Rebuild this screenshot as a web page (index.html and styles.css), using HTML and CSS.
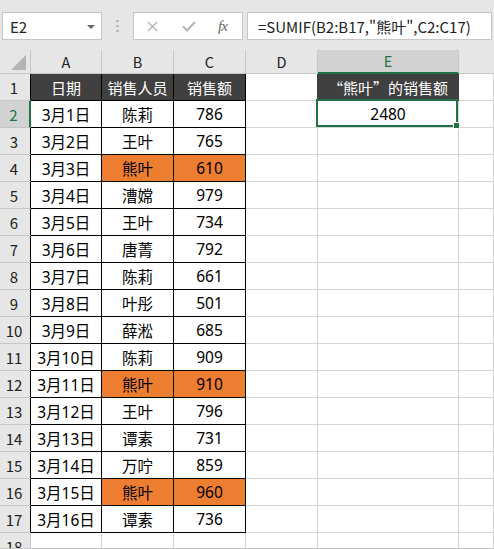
FILE: index.html
```html
<!DOCTYPE html>
<html lang="zh-CN">
<head>
<meta charset="utf-8">
<title>SUMIF</title>
<link rel="stylesheet" href="styles.css">
</head>
<body>
<div class="app">
  <div class="topbar">
    <div class="namebox">
      <span class="name">E2</span>
      <svg class="dd" width="8" height="4" viewBox="0 0 8 4"><polygon points="0,0 8,0 4,4" fill="#666"/></svg>
    </div>
    <div class="sep">
      <svg width="3" height="12" viewBox="0 0 3 12"><rect x="0.5" y="0" width="2" height="2" fill="#a8a8a8"/><rect x="0.5" y="5" width="2" height="2" fill="#a8a8a8"/><rect x="0.5" y="10" width="2" height="2" fill="#a8a8a8"/></svg>
    </div>
    <div class="fxbox">
      <svg class="ic-x" width="11" height="11" viewBox="0 0 11 11"><path d="M1 1 L10 10 M10 1 L1 10" stroke="#b4b4b4" stroke-width="1.4" fill="none"/></svg>
      <svg class="ic-ok" width="14" height="11" viewBox="0 0 14 11"><path d="M1 5.5 L5 9.5 L13 1" stroke="#b4b4b4" stroke-width="2" fill="none"/></svg>
      <span class="fx">fx</span>
    </div>
    <div class="formula">=SUMIF(B2:B17,"熊叶",C2:C17)</div>
  </div>
  <div class="sheet">
    <div class="ch corner"><span class="tri"></span></div>
    <div class="ch">A</div><div class="ch">B</div><div class="ch">C</div><div class="ch">D</div><div class="ch sel">E</div><div class="ch last"></div>

    <div class="rh tb">1</div>
    <div class="c t hd">日期</div><div class="c t hd">销售人员</div><div class="c t hd">销售额</div><div class="c dl"></div><div class="c hd e1">“熊叶”的销售额</div><div class="c"></div>

    <div class="rh rsel">2</div>
    <div class="c t">3月1日</div><div class="c t">陈莉</div><div class="c t">786</div><div class="c"></div><div class="c e2">2480<span class="selbox"><span class="handle"></span></span></div><div class="c"></div>

    <div class="rh tb">3</div>
    <div class="c t">3月2日</div><div class="c t">王叶</div><div class="c t">765</div><div class="c"></div><div class="c"></div><div class="c"></div>

    <div class="rh tb">4</div>
    <div class="c t">3月3日</div><div class="c t or">熊叶</div><div class="c t or">610</div><div class="c"></div><div class="c"></div><div class="c"></div>

    <div class="rh tb">5</div>
    <div class="c t">3月4日</div><div class="c t">漕嫦</div><div class="c t">979</div><div class="c"></div><div class="c"></div><div class="c"></div>

    <div class="rh tb">6</div>
    <div class="c t">3月5日</div><div class="c t">王叶</div><div class="c t">734</div><div class="c"></div><div class="c"></div><div class="c"></div>

    <div class="rh tb">7</div>
    <div class="c t">3月6日</div><div class="c t">唐菁</div><div class="c t">792</div><div class="c"></div><div class="c"></div><div class="c"></div>

    <div class="rh tb">8</div>
    <div class="c t">3月7日</div><div class="c t">陈莉</div><div class="c t">661</div><div class="c"></div><div class="c"></div><div class="c"></div>

    <div class="rh tb">9</div>
    <div class="c t">3月8日</div><div class="c t">叶彤</div><div class="c t">501</div><div class="c"></div><div class="c"></div><div class="c"></div>

    <div class="rh tb">10</div>
    <div class="c t">3月9日</div><div class="c t">薛淞</div><div class="c t">685</div><div class="c"></div><div class="c"></div><div class="c"></div>

    <div class="rh tb">11</div>
    <div class="c t">3月10日</div><div class="c t">陈莉</div><div class="c t">909</div><div class="c"></div><div class="c"></div><div class="c"></div>

    <div class="rh tb">12</div>
    <div class="c t">3月11日</div><div class="c t or">熊叶</div><div class="c t or">910</div><div class="c"></div><div class="c"></div><div class="c"></div>

    <div class="rh tb">13</div>
    <div class="c t">3月12日</div><div class="c t">王叶</div><div class="c t">796</div><div class="c"></div><div class="c"></div><div class="c"></div>

    <div class="rh tb">14</div>
    <div class="c t">3月13日</div><div class="c t">谭素</div><div class="c t">731</div><div class="c"></div><div class="c"></div><div class="c"></div>

    <div class="rh tb">15</div>
    <div class="c t">3月14日</div><div class="c t">万咛</div><div class="c t">859</div><div class="c"></div><div class="c"></div><div class="c"></div>

    <div class="rh tb">16</div>
    <div class="c t">3月15日</div><div class="c t or">熊叶</div><div class="c t or">960</div><div class="c"></div><div class="c"></div><div class="c"></div>

    <div class="rh tb">17</div>
    <div class="c t">3月16日</div><div class="c t">谭素</div><div class="c t">736</div><div class="c"></div><div class="c"></div><div class="c"></div>

    <div class="rh r18">18</div>
    <div class="c"></div><div class="c"></div><div class="c"></div><div class="c"></div><div class="c"></div><div class="c"></div>
  </div>
</div>
</body>
</html>
```

FILE: styles.css
```css
* { box-sizing: border-box; }
html, body { margin: 0; padding: 0; background: #ffffff; }
body {
  font-family: "Noto Sans CJK SC", "Noto Sans", sans-serif;
  color: #000;
}
.app {
  width: 494px;
  height: 549px;
  overflow: hidden;
  display: flex;
  flex-direction: column;
  border-bottom: 1px solid #c6c6c6;
}
.topbar {
  height: 50px;
  flex: none;
  background: #e6e6e6;
  display: flex;
  align-items: flex-start;
  padding: 12px 2px 0 2px;
}
.namebox {
  width: 100px;
  height: 28px;
  background: #fff;
  border: 1px solid #c6c6c6;
  display: flex;
  align-items: center;
  justify-content: space-between;
  padding: 0 6px 0 7px;
}
.name { font-size: 15px; color: #222; line-height: 1; }
.dd { margin-top: 1px; }
.sep {
  width: 31px;
  height: 28px;
  display: flex;
  align-items: center;
  justify-content: center;
}
.fxbox {
  width: 110px;
  height: 28px;
  background: #fff;
  border: 1px solid #c6c6c6;
  display: flex;
  align-items: center;
  padding-left: 13px;
}
.ic-x { margin-right: 24px; }
.ic-ok { margin-right: 22px; }
.fx {
  font-family: "Liberation Serif", serif;
  font-style: italic;
  font-size: 15px;
  color: #666;
  letter-spacing: -1px;
  line-height: 1;
}
.formula {
  margin-left: 4px;
  flex: 1;
  height: 28px;
  background: #fff;
  border: 1px solid #c6c6c6;
  display: flex;
  align-items: center;
  padding-left: 10px;
  font-size: 15px;
  color: #222;
  white-space: nowrap;
}
.sheet {
  flex: none;
  display: grid;
  grid-template-columns: 31px 71px 72px 72px 72px 141px 1fr;
  grid-template-rows: 24px repeat(18, 27px);
}
.ch {
  background: #e6e6e6;
  border-right: 1px solid #c6c6c6;
  border-bottom: 1px solid #c6c6c6;
  display: flex;
  align-items: center;
  justify-content: center;
  font-size: 14.5px;
  color: #222;
  padding-bottom: 1px;
}
.ch.sel {
  background: #d2d2d2;
  color: #217346;
  border-bottom: 2px solid #217346;
}
.ch.last { border-right: none; }
.corner { position: relative; }
.tri {
  position: absolute;
  right: 4px;
  bottom: 3px;
  width: 0;
  height: 0;
  border-left: 15px solid transparent;
  border-bottom: 15px solid #b4b4b4;
}
.rh {
  background: #e6e6e6;
  border-right: 1px solid #c6c6c6;
  border-bottom: 1px solid #c6c6c6;
  display: flex;
  align-items: center;
  justify-content: center;
  font-size: 15px;
  color: #222;
  padding-right: 2px;
}
.rh.tb { border-right-color: #000; }
.rh.rsel {
  background: #d2d2d2;
  color: #217346;
  border-right: 2px solid #217346;
}
.c {
  border-right: 1px solid #d4d4d4;
  border-bottom: 1px solid #d4d4d4;
  display: flex;
  align-items: center;
  justify-content: center;
  font-family: "Noto Sans", "Noto Sans CJK SC", sans-serif;
  font-size: 15.5px;
  white-space: nowrap;
}
.c.t {
  border-right-color: #000;
  border-bottom-color: #000;
}
.c.hd {
  background: #404040;
  color: #fff;
  font-family: "Noto Sans CJK SC", sans-serif;
  font-size: 15px;
}
.c.dl { border-right-color: #404040; }
.c.e1 {
  border-right-color: #404040;
  border-bottom-color: #404040;
}
.c.or { background: #ed7d31; }
.e2 { position: relative; }
.selbox {
  position: absolute;
  top: -2px;
  left: -2px;
  right: 0;
  bottom: 0;
  border: 2px solid #217346;
}
.handle {
  position: absolute;
  right: -4px;
  bottom: -4px;
  width: 7px;
  height: 7px;
  background: #217346;
  border: 1px solid #fff;
}
```
